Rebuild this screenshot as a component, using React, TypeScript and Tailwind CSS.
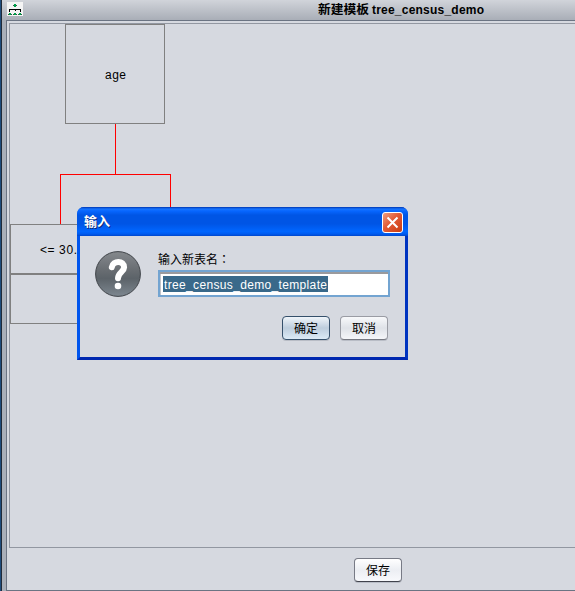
import React from "react";

const FONT = "font-['Liberation_Sans','Noto_Sans_CJK_SC',sans-serif]";

function TreeIcon() {
  return (
    <svg width="16" height="14" viewBox="0 0 16 14" shapeRendering="crispEdges" className="block bg-[#f4f4f4]">
      <path d="M2.5 10V7.5H13.5V10M8.5 7V9" fill="none" stroke="#000" />
      <path d="M6 3.5h4M1 12.5h4M6 12.5h4M11 12.5h4" stroke="#2f5a40" />
      <path d="M7 2h2v3H7zM2 11h2v2H2zM7 11h2v2H7zM12 11h2v2h-2z" fill="#00a04c" />
    </svg>
  );
}

function Button({ label, active = false, dark = false }: { label: string; active?: boolean; dark?: boolean }) {
  const look = active
    ? "border-[#35506b] bg-gradient-to-b from-[#f0f5fa] via-[#bdcddd] to-[#dceaf6]"
    : dark
      ? "border-[#777a85] border-b-[#41434c] bg-gradient-to-b from-white via-[#eceef3] to-[#f8f9fc]"
      : "border-[#9a9ca4] border-b-[#777982] bg-gradient-to-b from-[#f8f9fb] via-[#dfe2e8] to-[#f5f6f9]";
  return (
    <button className={`flex h-6 w-12 items-center justify-center rounded-[4px] border pt-px text-[12px] leading-none text-black shadow-[0_1px_0_#b9bdc6] ${look}`}>
      {label}
    </button>
  );
}

function Dialog() {
  return (
    <div className="absolute left-[77px] top-[207px] flex h-[153px] w-[331px] flex-col rounded-t-[7px] border-x-[3px] border-b-[3px] border-l-[#0055ee] border-r-[#0034c0] border-b-[#0028b0] bg-[#0050e6]">
      <div className="-mx-[3px] flex h-[29px] shrink-0 items-center justify-between rounded-t-[7px] bg-[linear-gradient(180deg,#0036b2_0%,#1674ff_7%,#0766ff_14%,#0055e5_28%,#0055e5_58%,#0066ff_84%,#005bef_93%,#0047cc_100%)] pl-[7px] pr-[5px]">
        <span className="text-[13px] font-bold text-white [text-shadow:1px_1px_0_#082878]">输入</span>
        <div className="mt-px flex size-[21px] items-center justify-center rounded-[3px] border border-white bg-[linear-gradient(135deg,#ee9d81,#e35a35_45%,#c83c12)]">
          <svg width="13" height="13" viewBox="0 0 13 13">
            <path d="M1.5 1.5l10 10M11.5 1.5l-10 10" stroke="#fff" strokeWidth="2" />
          </svg>
        </div>
      </div>
      <div className="flex flex-1 bg-[#d6d9e0] pl-[15px]">
        <svg width="46" height="46" viewBox="0 0 46 46" className="mt-[15px] shrink-0">
          <defs>
            <linearGradient id="ball" x1="0" y1="0" x2="0" y2="1">
              <stop offset="0" stopColor="#85898d" />
              <stop offset="0.45" stopColor="#666b70" />
              <stop offset="0.6" stopColor="#5c6369" />
              <stop offset="1" stopColor="#7d8790" />
            </linearGradient>
          </defs>
          <circle cx="23" cy="23" r="22.4" fill="url(#ball)" stroke="#41454a" />
          <path d="M16.8 16.2C18 9 29.2 9.2 29.1 16.4C29 21 23 21.5 23 27.3" fill="none" stroke="#fff" strokeWidth="6" strokeLinecap="round" />
          <circle cx="23" cy="35" r="3.3" fill="#fff" />
        </svg>
        <div className="ml-[17px] flex w-[232px] flex-col">
          <div className="mt-[14px] h-[19px] text-[12px] leading-[18px] text-black">
            输入新表名<span lang="zh-TW" className="font-['Noto_Sans_CJK_TC',sans-serif]">：</span>
          </div>
          <div className="mt-[1px] flex h-[27px] items-center border-2 border-[#73a4d1] bg-white pl-[3px] shadow-[inset_0_2px_0_#9a9a9d,inset_1px_0_0_#c0c3c9]">
            <span className="mt-px flex h-4 w-[165px] items-center bg-[#39698a] text-[12px] text-white">
              <svg width="165" height="16" className="block">
                <text x="1" y="13" textLength="163" lengthAdjust="spacing" fill="#fff">tree_census_demo_template</text>
              </svg>
            </span>
          </div>
          <div className="mt-[19px] flex justify-end gap-[10px] pr-[2px]">
            <Button label="确定" active />
            <Button label="取消" />
          </div>
        </div>
      </div>
    </div>
  );
}

export default function App() {
  return (
    <div className={`relative flex h-[591px] w-[575px] overflow-hidden bg-[#d6d9e0] ${FONT}`}>
      <div className="w-[1px] shrink-0 bg-[#1e4c7c]" />
      <div className="flex min-w-0 flex-1 flex-col border-l border-l-[#202a38] bg-[#a9afb9]">
        <header className="flex h-5 shrink-0 items-center bg-gradient-to-b from-[#d1d4da] to-[#a9aeb7] pl-[5px]">
          <div className="-mt-[2px]">
            <TreeIcon />
          </div>
          <div className="ml-[295px] flex h-5 items-center text-[12px] font-bold text-black">
            <svg width="170" height="20">
              <text x="0" y="14" textLength="51" lengthAdjust="spacingAndGlyphs">新建模板</text>
              <text x="54" y="14" textLength="112" lengthAdjust="spacing">tree_census_demo</text>
            </svg>
          </div>
        </header>
        <main className="ml-[4px] flex flex-1 flex-col border-y border-l border-[#6b7483] bg-[#d6d9e0] pl-[2px] pt-[2px]">
          <section className="relative h-[525px] border-y border-l border-[#9297a1]">
            <svg width="565" height="523" className="block text-[12px]" shapeRendering="crispEdges">
              <g fill="none" stroke="#808080">
                <rect x="55.5" y="0.5" width="99" height="99" />
                <rect x="0.5" y="200.5" width="99" height="49" />
                <rect x="0.5" y="250.5" width="99" height="49" />
              </g>
              <path d="M105.5 100V150M50.5 200V150.5H160.5V200" fill="none" stroke="#ff0000" />
              <text x="95" y="55" textLength="21">age</text>
              <text x="30" y="230" textLength="37">{"<= 30."}</text>
            </svg>
          </section>
          <footer className="flex flex-1 justify-start pl-[345px] pt-[10px]">
            <Button label="保存" dark />
          </footer>
        </main>
      </div>
      <Dialog />
    </div>
  );
}
